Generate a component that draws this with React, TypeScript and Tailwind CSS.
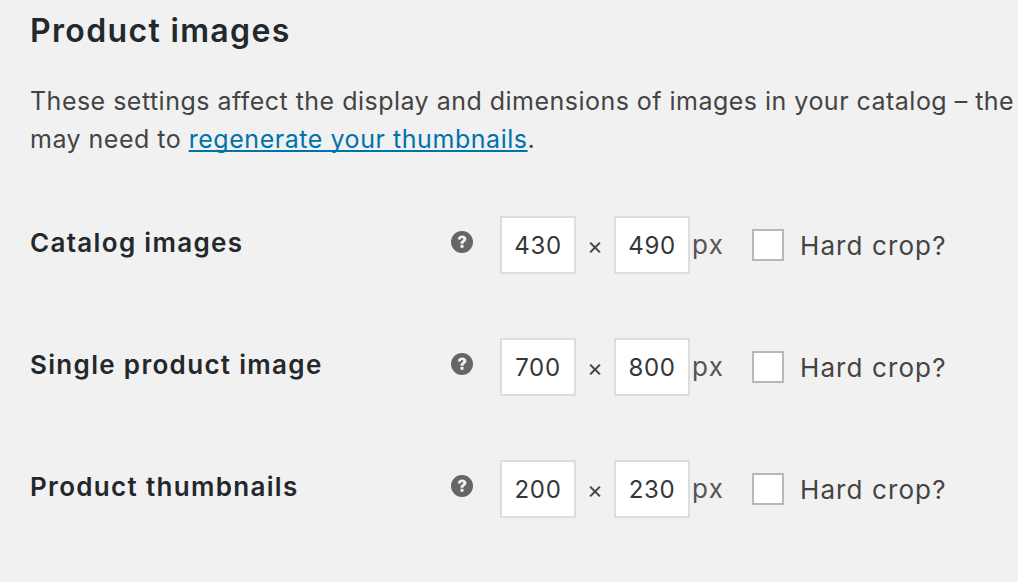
const rows = [
  { label: "Catalog images", w: "430", h: "490" },
  { label: "Single product image", w: "700", h: "800" },
  { label: "Product thumbnails", w: "200", h: "230" },
];

function Help() {
  return (
    <svg width="22" height="22" viewBox="0 0 22 22" className="block">
      <circle cx="11" cy="11" r="11" fill="#666666" />
      <path d="M6.8 8.4C6.9 5.8 8.700 4.400 11.200 4.400c2.500 0 4.200 1.400 4.200 3.500 0 2.700-2.900 2.800-2.900 4.800H9.500c0-3.300 2.700-3.300 2.700-4.700 0-.7-.4-1.100-1.100-1.100-.8 0-1.200.6-1.300 1.500H6.800z" fill="#f1f1f1" />
      <rect x="9.500" y="13.800" width="3" height="3" fill="#f1f1f1" />
    </svg>
  );
}

function Box({ value }: { value: string }) {
  return (
    <div className="w-[76px] h-[58px] pt-[2px] bg-white border-2 border-[#dddddd] flex items-center justify-center text-[24px] tracking-[0.7px] text-[#32373c]">
      {value}
    </div>
  );
}

export default function App() {
  return (
    <div className="w-[1018px] h-[582px] overflow-hidden bg-[#f1f1f1] pl-[30px] font-['Inter','Liberation_Sans',sans-serif] text-[#444444]">
      <h2 className="pt-[11px] text-[32px] leading-[40px] tracking-[1.35px] font-semibold text-[#23282d] whitespace-nowrap">Product images</h2>
      <p className="mt-[31px] text-[25px] leading-[38px] tracking-[0.48px] whitespace-nowrap">
        These settings affect the display and dimensions of images in your catalog – the
        <br />
        may need to <a className="text-[#0073aa] tracking-[0.55px] underline [text-decoration-skip-ink:none] decoration-2 underline-offset-[2px]">regenerate your thumbnails</a>.
      </p>
      <div className="mt-[58px] flex flex-col gap-[64px]">
        {rows.map((r) => (
          <div key={r.label} className="flex h-[58px] items-center">
            <div className="w-[421px] pb-[6px] text-[26px] tracking-[1.32px] font-semibold text-[#23282d] whitespace-nowrap">{r.label}</div>
            <div className="pb-[6px]"><Help /></div>
            <div className="ml-[27px]"><Box value={r.w} /></div>
            <span className="w-[38px] pt-[2px] text-center text-[24px] text-[#444444]">×</span>
            <Box value={r.h} />
            <span className="ml-[2px] w-[31px] text-[26px] tracking-[1.4px] pb-[2px] text-[#555555]">px</span>
            <div className="ml-[29px] w-[32px] h-[32px] bg-white border-2 border-[#b4b9be]" />
            <span className="ml-[16px] pt-[1px] text-[26px] tracking-[1.1px] text-[#444444] whitespace-nowrap">Hard crop?</span>
          </div>
        ))}
      </div>
    </div>
  );
}
